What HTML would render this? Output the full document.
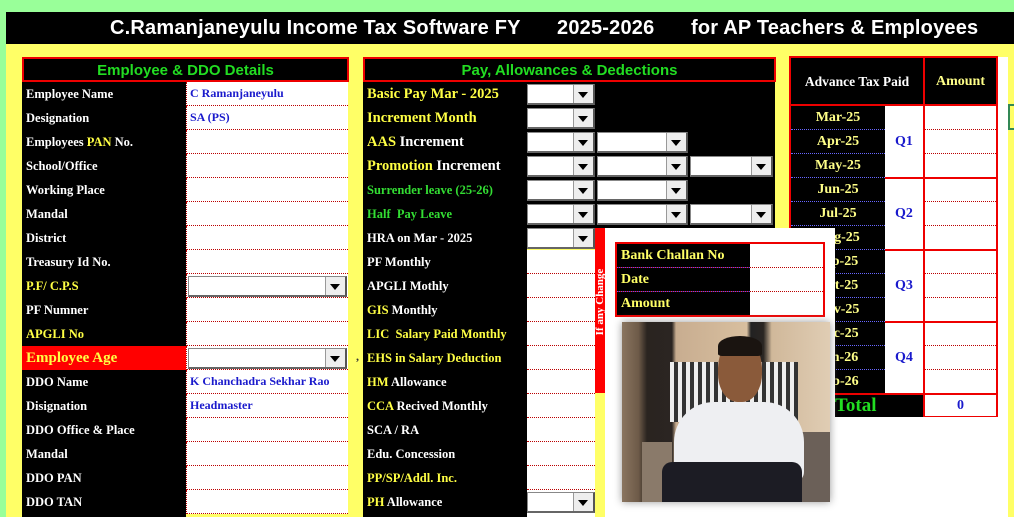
<!DOCTYPE html>
<html><head><meta charset="utf-8"><style>
*{margin:0;padding:0;box-sizing:border-box}
body{width:1014px;height:517px;overflow:hidden;background:#99ff99;position:relative;font-family:"Liberation Serif",serif;font-weight:bold}
.a{position:absolute}
.title{left:6px;top:12px;width:1008px;height:32px;background:#000}
.tt{position:absolute;top:12px;color:#fff;font-family:"Liberation Sans",sans-serif;font-size:20px;font-weight:bold;line-height:33px;white-space:pre;letter-spacing:0.2px}
.yel{left:6px;top:44px;width:1008px;height:473px;background:#ffff66}
.hdr{background:#000;border:2px solid #e00;color:#22dd22;font-family:"Liberation Sans",sans-serif;font-size:15px;text-align:center;line-height:23px}
.lab{background:#000;color:#fff;font-size:12.5px;padding-left:4px;height:24px;line-height:24px;white-space:nowrap;overflow:hidden}
.val{background:#fff;border-bottom:1px dotted #b00;border-left:1px dotted #b00;color:#1a1acc;font-size:12px;padding-left:3px;height:24px;line-height:22px;white-space:nowrap}
.y{color:#ffff44}.g{color:#33dd33}
.dd{background:#fff;border:1px solid #888;border-right:2px solid #555;border-bottom:2px solid #666;height:21px}
.dd::after{content:"";position:absolute;right:0;top:0;width:19px;height:18px;background:#eee;border-left:1px solid #999}
.dd::before{content:"";position:absolute;right:5px;top:7px;border-left:5px solid transparent;border-right:5px solid transparent;border-top:6px solid #000;z-index:2}
.rt{border:2px solid #e00}
.mon{background:#000;color:#ffff88;font-size:14px;text-align:center;height:24px;line-height:24px;border-bottom:1px dotted #66f}
</style></head><body>
<div class="a title"></div>
<div class="tt" style="left:110px">C.Ramanjaneyulu Income Tax Software FY</div>
<div class="tt" style="left:557px">2025-2026</div>
<div class="tt" style="left:691px">for AP Teachers &amp; Employees</div>
<div class="a yel"></div>

<div class="a hdr" style="left:22px;top:57px;width:327px;height:25px">Employee &amp; DDO  Details</div>
<div class="a" style="left:22px;top:82px;width:164px;height:435px;background:#000"></div>
<div id="L"></div>

<div class="a hdr" style="left:363px;top:57px;width:413px;height:25px">Pay, Allowances &amp; Dedections</div>
<div class="a" style="left:363px;top:82px;width:164px;height:435px;background:#000"></div>
<div class="a" style="left:527px;top:82px;width:248px;height:146px;background:#000"></div>
<div class="a" style="left:527px;top:250px;width:68px;height:267px;background:#fff"></div>
<div id="M"></div>

<div class="a" style="left:997px;top:57px;width:11px;height:460px;background:#fff"></div>
<div class="a" style="left:1008px;top:104px;width:6px;height:26px;border:2px solid #385;border-right:none"></div>
<div class="a rt" style="left:789px;top:56px;width:209px;height:362px;background:#fff"></div>
<div class="a" style="left:791px;top:58px;width:205px;height:47px;background:#000"></div>
<div class="a" style="left:791px;top:58px;width:132px;height:47px;color:#fff;font-size:13.5px;line-height:47px;text-align:center">Advance Tax Paid</div>
<div class="a" style="left:923px;top:56px;width:2px;height:362px;background:#e00"></div>
<div class="a" style="left:925px;top:58px;width:71px;height:47px;color:#ffff88;font-size:14px;line-height:47px;text-align:center">Amount</div>
<div class="a" style="left:789px;top:104px;width:209px;height:2px;background:#e00"></div>
<div id="R"></div>
<div class="a" style="left:791px;top:394px;width:132px;height:23px;background:#000;color:#22dd22;font-size:19px;line-height:23px;padding-left:44px">Total</div>
<div class="a" style="left:789px;top:393px;width:209px;height:2px;background:#e00"></div>
<div class="a" style="left:925px;top:395px;width:71px;height:22px;color:#1a1acc;font-size:14px;line-height:22px;text-align:center">0</div>
<div class="a" style="left:356px;top:349px;color:#333;font-size:12px">,</div>

<div class="a" style="left:595px;top:228px;width:10px;height:165px;background:#f00"></div>
<div class="a" style="left:555px;top:296px;width:90px;color:#fff;font-size:11px;transform:rotate(-90deg);white-space:nowrap;text-align:center;line-height:12px">If any Change</div>
<div class="a" style="left:605px;top:228px;width:230px;height:289px;background:#fff"></div>
<div class="a" style="left:835px;top:417px;width:173px;height:100px;background:#fff"></div>
<div class="a rt" style="left:615px;top:242px;width:210px;height:75px;background:#fff"></div>
<div class="a" style="left:617px;top:244px;width:133px;height:71px;background:#000"></div>
<div class="a" style="left:621px;top:244px;color:#ffff66;font-size:14px;line-height:24px">Bank Challan No<br>Date<br>Amount</div>
<div class="a" style="left:617px;top:267px;width:206px;border-top:1px dotted #b00"></div>
<div class="a" style="left:617px;top:267px;width:133px;border-top:1px dotted #55f"></div>
<div class="a" style="left:617px;top:291px;width:206px;border-top:1px dotted #b00"></div>
<div class="a" style="left:617px;top:291px;width:133px;border-top:1px dotted #55f"></div>
<div class="a" style="left:622px;top:322px;width:208px;height:180px;overflow:hidden;box-shadow:0 0 8px #999;background:linear-gradient(90deg,#8a7560 0,#6d5a48 8%,#2a2420 12%,#2b2522 24%,#c8ad90 26%,#d8bf9f 60%,#222 62%,#2a2522 68%,#d0b89a 72%,#e0cdb4 100%)">
<div class="a" style="left:48px;top:40px;width:128px;height:60px;background:repeating-linear-gradient(90deg,#eee 0 4px,#333 4px 8px)"></div>
<div class="a" style="left:20px;top:120px;width:30px;height:60px;background:#8a7a6a"></div>
<div class="a" style="left:150px;top:110px;width:58px;height:70px;background:#6b6058"></div>
<div class="a" style="left:52px;top:80px;width:130px;height:80px;border-radius:40px 40px 10px 10px;background:#eeeff2"></div>
<div class="a" style="left:96px;top:18px;width:44px;height:62px;border-radius:45%;background:#8a5a3a"></div>
<div class="a" style="left:96px;top:14px;width:44px;height:20px;border-radius:50% 50% 10% 10%;background:#1a1410"></div>
<div class="a" style="left:40px;top:140px;width:140px;height:40px;background:#1c1c24;border-radius:10px 10px 0 0"></div>
</div>

<script>
var L=[["Employee Name","C Ramanjaneyulu"],["Designation","SA (PS)"],["Employees <span class=y>PAN</span> No.",""],["School/Office",""],["Working Place",""],["Mandal",""],["District",""],["Treasury Id No.",""],["<span class=y>P.F/ C.P.S</span>","DD"],["PF Numner",""],["<span class=y>APGLI No</span>",""],["AGE","DD"],["DDO Name","K Chanchadra Sekhar Rao"],["Disignation","Headmaster"],["DDO Office &amp; Place",""],["Mandal",""],["DDO PAN",""],["DDO TAN",""]];
var h="";
L.forEach(function(r,i){var t=82+24*i;
 if(r[0]=="AGE")h+='<div class="a lab" style="left:22px;top:'+t+'px;width:164px;background:#f00;color:#ffff44;font-size:15px">Employee Age</div>';
 else h+='<div class="a lab" style="left:22px;top:'+t+'px;width:164px">'+r[0]+'</div>';
 if(r[1]=="DD")h+='<div class="a val" style="left:186px;top:'+t+'px;width:162px"></div><div class="a dd" style="left:188px;top:'+(t+2)+'px;width:159px"></div>';
 else h+='<div class="a val" style="left:186px;top:'+t+'px;width:162px">'+r[1]+'</div>';});
document.getElementById("L").outerHTML=h;
var M=[['<span class=y style="font-size:14.5px">Basic Pay Mar - 2025</span>',1],['<span class=y style="font-size:14.5px">Increment Month</span>',1],['<span class=y style="font-size:14.5px">AAS</span><span style="font-size:14.5px"> Increment</span>',2],['<span class=y style="font-size:14.5px">Promotion</span><span style="font-size:14.5px"> Increment</span>',3],['<span class=g>Surrender leave (25-26)</span>',2],['<span class=g>Half&nbsp; Pay Leave</span>',3],['HRA on Mar - 2025',1],['PF Monthly',0],['APGLI Mothly',0],['<span class=y>GIS</span> Monthly',0],['<span class=y>LIC&nbsp; Salary Paid Monthly</span>',0],['<span class=y>EHS in Salary Deduction</span>',0],['<span class=y>HM</span> Allowance',0],['<span class=y>CCA</span> Recived Monthly',0],['SCA / RA',0],['Edu. Concession',0],['<span class=y>PP/SP/Addl. Inc.</span>',0],['<span class=y>PH</span> Allowance',4]];
h="";
M.forEach(function(r,i){var t=82+24*i;
 h+='<div class="a lab" style="left:363px;top:'+t+'px;width:164px">'+r[0]+'</div>';
 if(i>=7&&r[1]==0)h+='<div class="a" style="left:527px;top:'+(t+23)+'px;width:68px;border-top:1px dotted #b00"></div>';
 var n=r[1]==4?1:r[1];
 var xs=[[527,68],[597,91],[690,83]];
 for(var k=0;k<n;k++)h+='<div class="a dd" style="left:'+xs[k][0]+'px;top:'+(t+2)+'px;width:'+xs[k][1]+'px"></div>';});
document.getElementById("M").outerHTML=h;
var R=["Mar-25","Apr-25","May-25","Jun-25","Jul-25","Aug-25","Sep-25","Oct-25","Nov-25","Dec-25","Jan-26","Feb-26"];
h="";
R.forEach(function(m,i){var t=106+24*i;
 h+='<div class="a mon" style="left:791px;top:'+t+'px;width:94px">'+m+'</div>';
 if(i%3!=2)h+='<div class="a" style="left:925px;top:'+(t+23)+'px;width:71px;border-top:1px dotted #b00"></div>';
 else if(i<11)h+='<div class="a" style="left:885px;top:'+(t+23)+'px;width:113px;height:2px;background:#e00"></div>';
 if(i%3==1)h+='<div class="a" style="left:885px;top:'+t+'px;width:38px;height:24px;line-height:24px;text-align:center;color:#1a1acc;font-size:14px">Q'+((i-1)/3+1)+'</div>';});
document.getElementById("R").outerHTML=h;
</script>
</body></html>
